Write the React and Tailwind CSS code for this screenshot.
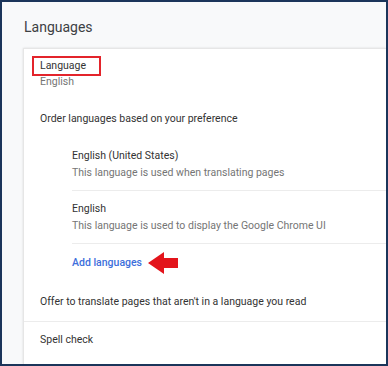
import React from 'react';

const font = { fontFamily: 'Roboto, "Noto Sans", Arial, sans-serif' };

const languages = [
  { name: 'English (United States)', note: 'This language is used when translating pages' },
  { name: 'English', note: 'This language is used to display the Google Chrome UI' },
];

const ArrowLeft = () => (
  <svg width="31" height="22" viewBox="0 0 31 22" className="ml-[6px]">
    <polygon points="0,11 16,0 16,6 30,6 30,16 16,16 16,22" fill="#e3141b" />
  </svg>
);

export default function App() {
  return (
    <div
      className="flex flex-col w-[388px] h-[366px] overflow-hidden border-2 border-[#1b355a] bg-[#f8f9fa] text-[10.5px] text-[#333333]"
      style={font}
    >
      <div className="h-[46px] shrink-0 pl-[22px] pt-[16px] text-[14px] leading-[18px] text-[#3c4043]">
        Languages
      </div>

      <div className="flex-1 ml-[21px] bg-white border-t border-l border-[#e6e6e6] shadow-[0_0_2px_rgba(0,0,0,0.12)]">
        <div className="pl-[8px] pt-[7px]">
          <div className="inline-block border-2 border-[#e3242b] h-[20px] pl-[6px] pr-[13px] leading-[16px] text-[#333333]">
            Language
          </div>
          <div className="-mt-[1px] pl-[8px] leading-[14px] text-[#757575]">English</div>
        </div>

        <div className="pl-[16px] mt-[20px] leading-[20px]">Order languages based on your preference</div>

        <div className="pl-[48px] pt-[18px]">
          {languages.map((lang) => (
            <div key={lang.name} className="border-b border-[#ececec] pb-[9px] pt-[9px] first:pt-0">
              <div className="leading-[17px]">{lang.name}</div>
              <div className="leading-[17px] text-[#757575]">{lang.note}</div>
            </div>
          ))}
          <div className="flex items-center pt-[10px] h-[28px]">
            <span className="leading-[18px] font-medium text-[#3d6fdb]">Add languages</span>
            <ArrowLeft />
          </div>
        </div>

        <div className="pl-[16px] pt-[20px] pb-[9px] leading-[20px] border-b border-[#ececec]">
          Offer to translate pages that aren't in a language you read
        </div>

        <div className="pl-[16px] pt-[9px] leading-[18px]">Spell check</div>
      </div>
    </div>
  );
}
